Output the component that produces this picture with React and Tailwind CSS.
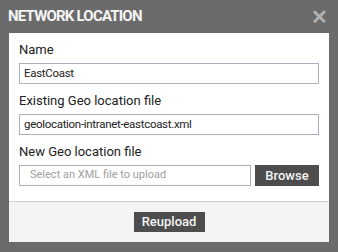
export default function App() {
  return (
    <div className="w-[338px] h-[252px] bg-[#6b6b6b] flex flex-col" style={{ fontFamily: "Roboto, 'Liberation Sans', sans-serif" }}>
      <div className="h-[33px] flex items-center justify-between pl-[8px] pr-[10px]">
        <span className="text-[15px] font-bold text-[#f4f4f4] tracking-[-0.8px]">NETWORK LOCATION</span>
        <span className="text-[#b3b3b3] text-[20px] font-bold leading-none">✕</span>
      </div>
      <div className="mx-[9px] bg-white flex flex-col">
        <div className="px-[10px] pt-[9px] pb-[15px] flex flex-col">
          <label className="text-[13px] leading-[15px] text-[#222]">Name</label>
          <div className="mt-[6px] h-[21px] border border-[#aab1be] flex items-center px-[4px] text-[11.5px] tracking-[-0.3px] text-[#222]">EastCoast</div>
          <label className="mt-[9px] text-[13px] leading-[15px] text-[#222]">Existing Geo location file</label>
          <div className="mt-[6px] h-[21px] border border-[#aab1be] flex items-center px-[4px] text-[11.5px] tracking-[-0.3px] text-[#222]">geolocation-intranet-eastcoast.xml</div>
          <label className="mt-[9px] text-[13px] leading-[15px] text-[#222]">New Geo location file</label>
          <div className="mt-[6px] flex gap-[4px]">
            <div className="flex-1 h-[21px] border border-[#aab1be] flex items-center px-[10px] text-[11px] text-[#a0a0a0]">Select an XML file to upload</div>
            <button className="w-[64px] h-[21px] bg-[#4d4d4d] text-[#f4f4f4] text-[13px] font-medium">Browse</button>
          </div>
        </div>
        <div className="h-[41px] border-t border-[#cccccc] bg-[#f4f4f4] flex items-center justify-center">
          <button className="w-[71px] h-[20px] bg-[#4d4d4d] text-[#f4f4f4] text-[13px] font-medium">Reupload</button>
        </div>
      </div>
    </div>
  );
}
